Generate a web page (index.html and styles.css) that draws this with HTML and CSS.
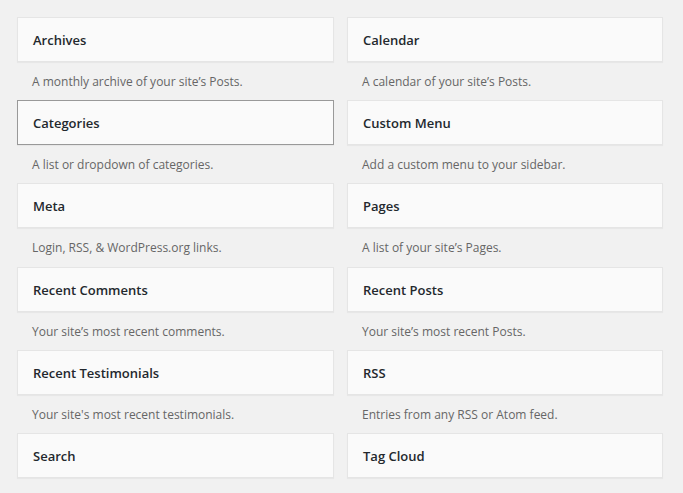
FILE: index.html
```html
<!DOCTYPE html>
<html>
<head>
    <meta name="viewport" content="width=device-width, initial-scale=1.0">
    <link rel="stylesheet" href="styles.css">
</head>
<body>
    <!-- Available widgets -->
    <div class="widget-list">
        <div class="widget">
            <div class="widget-top"><h3>Archives</h3></div>
            <p class="widget-description">A monthly archive of your site’s Posts.</p>
        </div>
        <div class="widget">
            <div class="widget-top"><h3>Calendar</h3></div>
            <p class="widget-description">A calendar of your site’s Posts.</p>
        </div>
        <div class="widget">
            <div class="widget-top focused"><h3>Categories</h3></div>
            <p class="widget-description">A list or dropdown of categories.</p>
        </div>
        <div class="widget">
            <div class="widget-top"><h3>Custom Menu</h3></div>
            <p class="widget-description">Add a custom menu to your sidebar.</p>
        </div>
        <div class="widget">
            <div class="widget-top"><h3>Meta</h3></div>
            <p class="widget-description">Login, RSS, &amp; WordPress.org links.</p>
        </div>
        <div class="widget">
            <div class="widget-top"><h3>Pages</h3></div>
            <p class="widget-description">A list of your site’s Pages.</p>
        </div>
        <div class="widget">
            <div class="widget-top"><h3>Recent Comments</h3></div>
            <p class="widget-description">Your site’s most recent comments.</p>
        </div>
        <div class="widget">
            <div class="widget-top"><h3>Recent Posts</h3></div>
            <p class="widget-description">Your site’s most recent Posts.</p>
        </div>
        <div class="widget">
            <div class="widget-top"><h3>Recent Testimonials</h3></div>
            <p class="widget-description">Your site's most recent testimonials.</p>
        </div>
        <div class="widget">
            <div class="widget-top"><h3>RSS</h3></div>
            <p class="widget-description">Entries from any RSS or Atom feed.</p>
        </div>
        <div class="widget">
            <div class="widget-top"><h3>Search</h3></div>
        </div>
        <div class="widget">
            <div class="widget-top"><h3>Tag Cloud</h3></div>
        </div>
    </div>
</body>
</html>
```

FILE: styles.css
```css
body {
    margin: 0;
    background-color: #f1f1f1;
    color: #444;
    font-family: "Open Sans", "Liberation Sans", sans-serif;
    font-size: 13px;
    line-height: 1.4em;
}

/* Two column widget grid */
.widget-list {
    display: grid;
    grid-template-columns: 317px 316px;
    column-gap: 13px;
    padding: 17px;
}

.widget-top {
    background-color: #fafafa;
    border: 1px solid #e5e5e5;
    box-shadow: 0 1px 1px rgba(0, 0, 0, 0.04);
}

.widget-top.focused {
    border-color: #999;
}

.widget-top h3 {
    margin: 0;
    padding: 16px 15px 14px;
    font-size: 13px;
    font-weight: 600;
    line-height: 13px;
    color: #23282d;
}

.widget-description {
    margin: 0;
    padding: 11px 15px 9px;
    font-size: 12px;
    line-height: 18.2px;
    color: #666;
}
```
